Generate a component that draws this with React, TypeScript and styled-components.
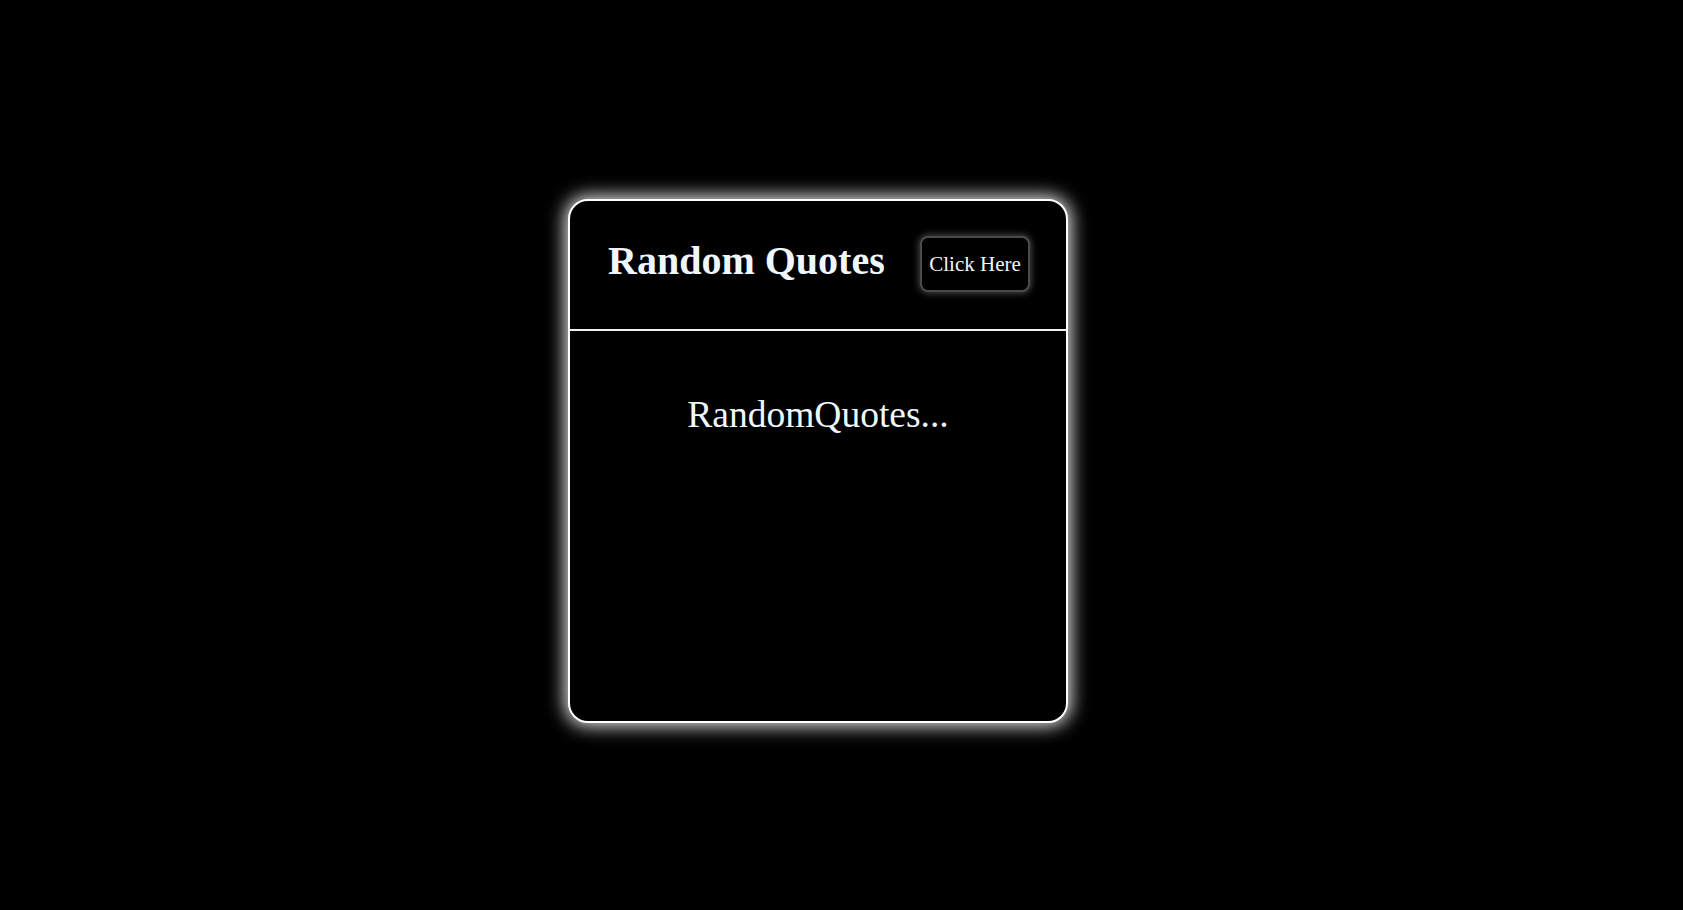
import React from "react";
import styled, { createGlobalStyle } from "styled-components";

const GlobalStyle = createGlobalStyle`
  html, body {
    margin: 0;
    padding: 0;
    background: #000;
  }
  body {
    font-family: "Liberation Serif", "Times New Roman", serif;
    color: aliceblue;
  }
`;

const Page = styled.div`
  min-height: 910px;
  box-sizing: border-box;
  padding: 199px 0 0 568px;
  display: flex;
  align-items: flex-start;
`;

const Card = styled.div`
  box-sizing: border-box;
  width: 500px;
  height: 524px;
  border: 2px solid #fff;
  border-radius: 20px;
  background: #000;
  box-shadow: 0 0 18px 3px rgba(255, 255, 255, 0.9);
  display: flex;
  flex-direction: column;
`;

const Header = styled.div`
  height: 130px;
  box-sizing: border-box;
  padding: 0 36px 2px 38px;
  display: flex;
  align-items: center;
  justify-content: space-between;
  border-bottom: 2px solid #f2f2f2;
`;

const Title = styled.h1`
  margin: 0;
  font-size: 40px;
  font-weight: bold;
  color: aliceblue;
  position: relative;
  top: -4px;
`;

const Button = styled.button`
  box-sizing: border-box;
  width: 110px;
  height: 56px;
  padding: 0 6px;
  background: #000;
  color: aliceblue;
  font-family: "Liberation Serif", "Times New Roman", serif;
  font-size: 21px;
  border: 2px solid #4a4a4a;
  border-radius: 8px;
  box-shadow: 0 0 7px 1px rgba(255, 255, 255, 0.3);
  cursor: pointer;
`;

const Body = styled.div`
  flex: 1;
  padding-top: 62px;
  text-align: center;
`;

const Quote = styled.p`
  margin: 0;
  font-size: 37.5px;
  color: aliceblue;
`;

export default function App() {
  return (
    <>
      <GlobalStyle />
      <Page>
        <Card>
          <Header>
            <Title>Random Quotes</Title>
            <Button>Click Here</Button>
          </Header>
          <Body>
            <Quote>RandomQuotes...</Quote>
          </Body>
        </Card>
      </Page>
    </>
  );
}
